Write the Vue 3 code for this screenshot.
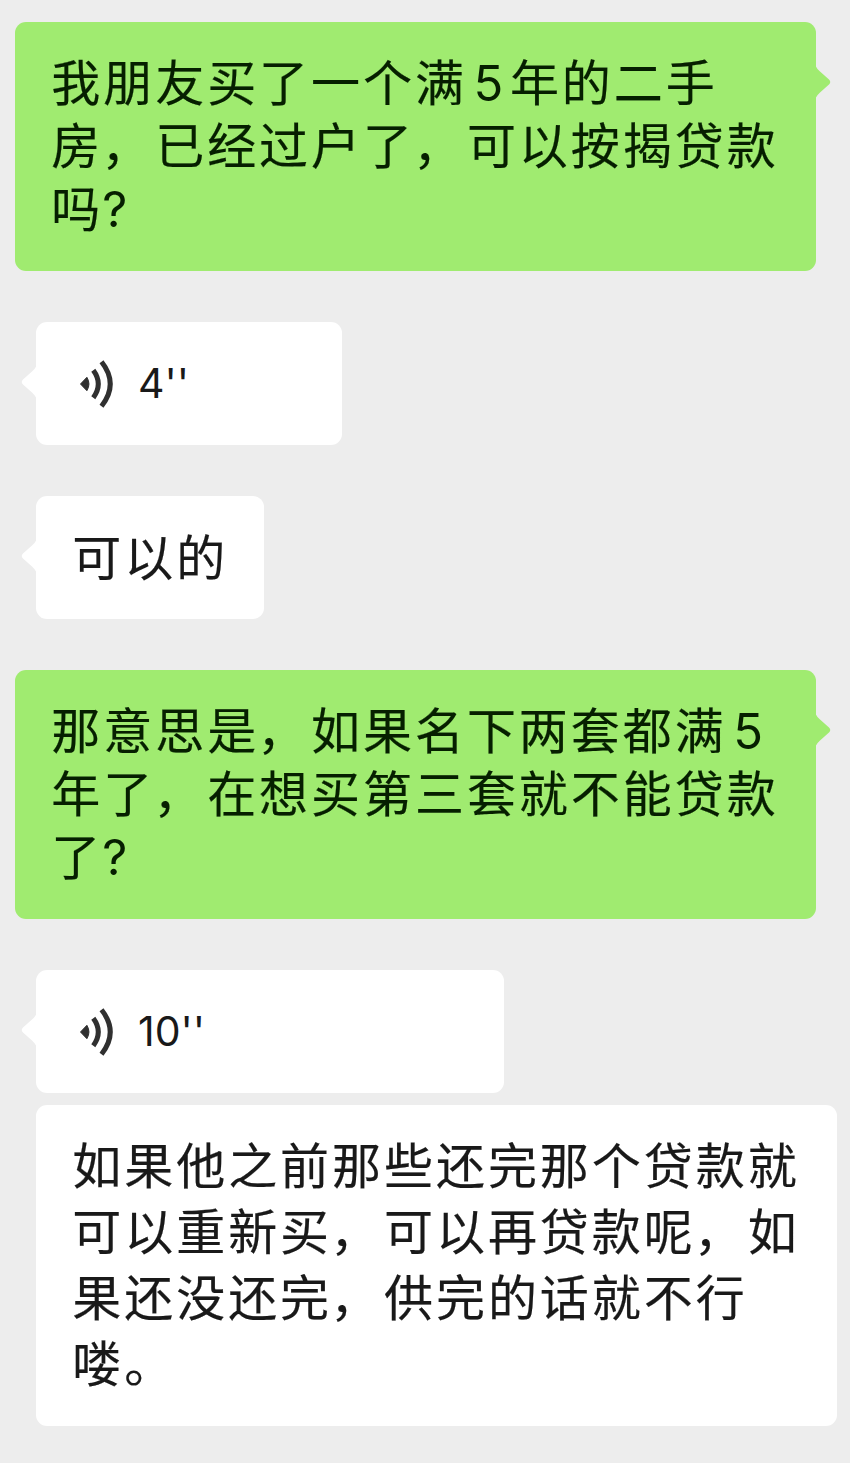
<template>
  <div class="chat">
    <div
      v-for="(msg, index) in messages"
      :key="index"
      class="bubble"
      :class="[msg.from, msg.type, { long: msg.long, tail: msg.tail }]"
      :style="{ width: msg.width + 'px' }"
    >
      <!-- Bubble tail -->
      <svg v-if="msg.tail" class="arrow" width="16" height="36" viewBox="0 0 16 36">
        <path d="M16 1 L16 35 Q14 31 11 28.500 L2 20.500 Q-0.500 18 2 15.500 L11 7.500 Q14 5 16 1 Z" />
      </svg>

      <!-- Voice message -->
      <template v-if="msg.type === 'voice'">
        <svg class="wave" width="36" height="50" viewBox="0 0 36 50">
          <path class="dot" d="M1.500 25 L7.900 18.300 Q12 25 7.900 31.700 Z" />
          <path d="M14.300 11.300 Q24.300 25 14.300 38.700" />
          <path d="M22.500 2.800 Q40 25 22.500 47.200" />
        </svg>
        <span class="seconds">{{ msg.seconds }}''</span>
      </template>

      <!-- Text message -->
      <template v-else>
        <div v-for="(line, i) in msg.lines" :key="i" class="line">
          <span
            v-for="(part, j) in splitLine(line)"
            :key="j"
            :class="{ digit: part === '5', mark: part === '?', comma: part === '，' }"
          >{{ part }}</span>
        </div>
      </template>
    </div>
  </div>
</template>

<script setup>
import { ref } from "vue";

// Messages Array
const messages = ref([
  {
    from: "me",
    type: "text",
    width: 801,
    tail: true,
    lines: ["我朋友买了一个满5年的二手", "房，已经过户了，可以按揭贷款", "吗?"],
  },
  { from: "other", type: "voice", width: 306, tail: true, seconds: 4 },
  { from: "other", type: "text", width: 228, tail: true, lines: ["可以的"] },
  {
    from: "me",
    type: "text",
    width: 801,
    tail: true,
    lines: ["那意思是，如果名下两套都满5", "年了，在想买第三套就不能贷款", "了?"],
  },
  { from: "other", type: "voice", width: 468, tail: true, seconds: 10 },
  {
    from: "other",
    type: "text",
    width: 801,
    long: true,
    lines: [
      "如果他之前那些还完那个贷款就",
      "可以重新买，可以再贷款呢，如",
      "果还没还完，供完的话就不行",
      "喽。",
    ],
  },
]);

// Separate digits and punctuation from the Chinese text
const splitLine = (line) => line.split(/([5?，])/).filter((part) => part);
</script>

<style>
body {
  background: #ededed;
}
</style>

<style scoped>
.chat {
  display: flex;
  flex-direction: column;
  gap: 51px;
  box-sizing: border-box;
  height: 1463px;
  padding: 22px 13px 0 15px;
  background: #ededed;
  font-family: "Noto Sans CJK SC", sans-serif;
}

.bubble {
  position: relative;
  flex: none;
  box-sizing: border-box;
  border-radius: 11px;
}

.me {
  height: 249px;
  padding: 26px 36.300px;
  background: #a0eb70;
  color: #061f00;
}

.other {
  height: 123px;
  margin-left: 21px;
  padding: 27px 36.300px;
  background: #fff;
  color: #191919;
}

.other.long {
  height: 321px;
  margin-top: -39px;
  padding-top: 25px;
}

.line {
  height: 63px;
  line-height: 63px;
  font-size: 49px;
  letter-spacing: 2.950px;
  white-space: nowrap;
  -webkit-text-stroke: 0.2px currentColor;
}

.long .line {
  height: 66px;
  line-height: 66px;
}

.digit,
.mark {
  font-family: Inter, sans-serif;
  letter-spacing: 0;
  -webkit-text-stroke: 0;
}

.digit {
  display: inline-block;
  width: 43px;
  text-align: center;
}

.mark {
  margin-left: -1px;
}

.comma {
  margin-left: -2px;
  margin-right: 2px;
}

.voice {
  display: flex;
  align-items: center;
  padding: 0 43px;
}

.wave {
  fill: none;
  stroke: #303030;
  stroke-width: 5;
}

.wave .dot {
  fill: #303030;
  stroke: #303030;
  stroke-width: 1;
  stroke-linejoin: round;
}

.seconds {
  margin-left: 23px;
  padding-bottom: 1px;
  font-family: Inter, sans-serif;
  font-size: 41px;
  line-height: 50px;
}

.arrow {
  position: absolute;
  top: 42px;
  left: -15px;
  fill: #fff;
}

.me .arrow {
  right: -15px;
  left: auto;
  fill: #a0eb70;
  transform: scaleX(-1);
}
</style>
